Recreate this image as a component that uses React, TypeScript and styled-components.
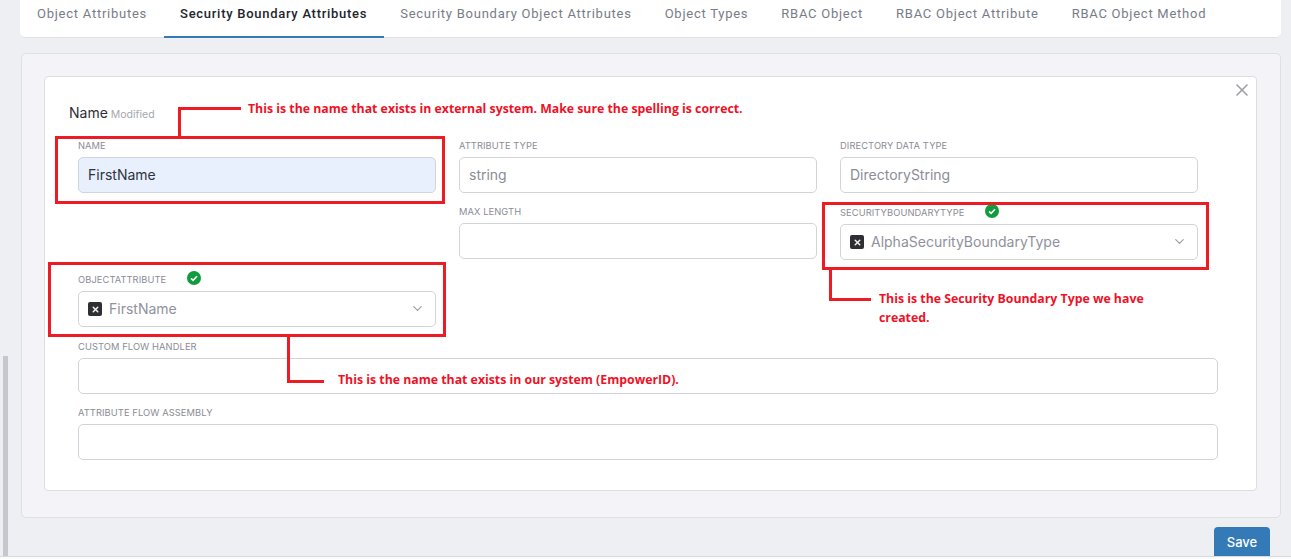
import React from 'react';
import styled, {createGlobalStyle} from 'styled-components';
import {ChevronDown, X} from 'lucide-react';

const GlobalStyle = createGlobalStyle`
  html, body {
    margin: 0;
    padding: 0;
    background: #eeeff3;
    font-family: Inter, 'Liberation Sans', sans-serif;
  }
`;

const Page = styled.div`
  position: relative;
  width: 1291px;
  height: 559px;
  overflow: hidden;
  box-sizing: border-box;
  padding: 0 10px 0 20px;
  background: #eeeff3;
`;

const Scrollbar = styled.div`
  position: absolute;
  left: 3px;
  top: 356px;
  width: 5px;
  height: 200px;
  background: #c6c7cc;
`;

const TabBar = styled.div`
  display: flex;
  height: 38px;
  padding-left: 0.5px;
  background: #fff;
  border-bottom: 1px solid #dfe0e5;
  border-radius: 0 0 5px 5px;
  box-sizing: border-box;
`;

const Tab = styled.div<{$active?: boolean}>`
  height: 38px;
  box-sizing: border-box;
  padding: 6px 16.5px 0;
  font-family: Roboto, sans-serif;
  font-size: 13px;
  line-height: 16px;
  letter-spacing: ${p => (p.$active ? '0.72px' : '0.75px')};
  white-space: nowrap;
  font-weight: ${p => (p.$active ? 500 : 400)};
  color: ${p => (p.$active ? '#22252b' : '#787c87')};
  border-bottom: 2px solid ${p => (p.$active ? '#337ab7' : 'transparent')};
`;

const Panel = styled.div`
  margin: 15px 0 0 1px;
  height: 465px;
  box-sizing: border-box;
  padding: 22px 23px 0 22px;
  background: #f3f3f8;
  border: 1px solid #dfe0e6;
  border-radius: 5px;
`;

const Card = styled.div`
  position: relative;
  height: 415px;
  box-sizing: border-box;
  padding: 26px 38px 0 33px;
  background: #fff;
  border: 1px solid #dcdde2;
  border-radius: 4px;
`;

const Close = styled.div`
  position: absolute;
  right: 4px;
  top: 3px;
  color: #a0a1a6;
  line-height: 0;
`;

const Heading = styled.div`
  display: flex;
  align-items: baseline;
  gap: 3px;
  margin-left: -9px;
  height: 25px;
  font-size: 14px;
  line-height: 20px;
  color: #2c2f36;
`;

const Modified = styled.span`
  font-size: 10.5px;
  color: #a5a7ae;
`;

const Columns = styled.div`
  display: grid;
  grid-template-columns: repeat(3, 358px);
  column-gap: 23px;
  margin-top: 7px;
`;

const Column = styled.div<{$gap?: number}>`
  display: flex;
  flex-direction: column;
  gap: ${p => p.$gap ?? 9}px;
`;

const Spacer = styled.div`
  height: 58px;
`;

const Field = styled.div`
  display: flex;
  flex-direction: column;
`;

const FullField = styled(Field)`
  margin-top: 8.5px;
`;

const Label = styled.div`
  display: flex;
  align-items: center;
  height: 20px;
  box-sizing: border-box;
  padding-top: 2px;
  margin-bottom: 2px;
  font-size: 9.3px;
  line-height: 12px;
  letter-spacing: 0.1px;
  text-transform: uppercase;
  color: #8a8c95;
`;

const Check = styled.svg`
  position: relative;
  top: -2px;
  margin-left: 21px;
`;

const Input = styled.div<{$filled?: boolean}>`
  display: flex;
  align-items: center;
  height: 36px;
  box-sizing: border-box;
  padding: 0 9px 2px;
  font-size: 14px;
  color: ${p => (p.$filled ? '#30333a' : '#8a8d96')};
  background: ${p => (p.$filled ? '#e8f0fe' : '#fff')};
  border: 1px solid #d3d4d9;
  border-radius: 5px;
`;

const SelectBox = styled(Input)`
  justify-content: space-between;
  padding-right: 10px;
  color: #8f929b;
`;

const SelectValue = styled.div`
  display: flex;
  align-items: center;
  gap: 7px;
`;

const TagRemove = styled.span`
  display: flex;
  align-items: center;
  justify-content: center;
  width: 14px;
  height: 14px;
  margin-top: 2px;
  border-radius: 2px;
  background: #2f2f33;
  color: #f2f2f2;
`;

const Footer = styled.div`
  display: flex;
  justify-content: flex-end;
  padding: 9px 11px 0 0;
`;

const SaveButton = styled.button`
  width: 56px;
  height: 30px;
  border: 0;
  border-radius: 4px 4px 0 0;
  background: #337ab7;
  color: #fff;
  font-family: Inter, sans-serif;
  font-size: 13px;
  font-weight: 500;
`;

const BottomEdge = styled.div`
  position: absolute;
  left: 0;
  right: 0;
  bottom: 0;
  height: 2px;
  background: #fbfbfc;
  border-top: 1px solid #d9dade;
`;

const RedBox = styled.div<{$x: number; $y: number; $w: number; $h: number}>`
  position: absolute;
  left: ${p => p.$x}px;
  top: ${p => p.$y}px;
  width: ${p => p.$w}px;
  height: ${p => p.$h}px;
  box-sizing: border-box;
  border: 3px solid #ed1c24;
`;

const Leader = styled.div<{$x: number; $y: number; $w: number; $h: number}>`
  position: absolute;
  left: ${p => p.$x}px;
  top: ${p => p.$y}px;
  width: ${p => p.$w}px;
  height: ${p => p.$h}px;
  background: #ed1c24;
`;

const Note = styled.div<{$x: number; $y: number; $w?: number}>`
  position: absolute;
  left: ${p => p.$x}px;
  top: ${p => p.$y}px;
  width: ${p => (p.$w ? `${p.$w}px` : 'auto')};
  font-family: 'Open Sans', sans-serif;
  font-size: 12.3px;
  font-weight: 700;
  line-height: 19px;
  white-space: ${p => (p.$w ? 'normal' : 'nowrap')};
  color: #ee1127;
`;

function CheckBadge() {
  return (
    <Check width="14" height="14" viewBox="0 0 14 14">
      <circle cx="7" cy="7" r="7" fill="#0f9b3e" />
      <path d="M4 7.3l2.1 2L10 5.2" fill="none" stroke="#fff" strokeWidth="1.6" />
    </Check>
  );
}

function Select({value}: {value: string}) {
  return (
    <SelectBox>
      <SelectValue>
        <TagRemove>
          <X size={9} strokeWidth={4} />
        </TagRemove>
        {value}
      </SelectValue>
      <ChevronDown size={15} strokeWidth={1.8} color="#9a9ca3" />
    </SelectBox>
  );
}

const TABS = [
  'Object Attributes',
  'Security Boundary Attributes',
  'Security Boundary Object Attributes',
  'Object Types',
  'RBAC Object',
  'RBAC Object Attribute',
  'RBAC Object Method',
];

export default function App() {
  return (
    <Page>
      <GlobalStyle />
      <Scrollbar />
      <TabBar>
        {TABS.map((t, i) => (
          <Tab key={t} $active={i === 1}>
            {t}
          </Tab>
        ))}
      </TabBar>
      <Panel>
        <Card>
          <Close>
            <X size={20} strokeWidth={2} />
          </Close>
          <Heading>
            Name <Modified>Modified</Modified>
          </Heading>
          <Columns>
            <Column>
              <Field>
                <Label>Name</Label>
                <Input $filled>FirstName</Input>
              </Field>
              <Spacer />
              <Field>
                <Label>
                  ObjectAttribute
                  <CheckBadge />
                </Label>
                <Select value="FirstName" />
              </Field>
            </Column>
            <Column $gap={8}>
              <Field>
                <Label>Attribute Type</Label>
                <Input>string</Input>
              </Field>
              <Field>
                <Label>Max Length</Label>
                <Input />
              </Field>
            </Column>
            <Column>
              <Field>
                <Label>Directory Data Type</Label>
                <Input>DirectoryString</Input>
              </Field>
              <Field>
                <Label>
                  SecurityBoundaryType
                  <CheckBadge />
                </Label>
                <Select value="AlphaSecurityBoundaryType" />
              </Field>
            </Column>
          </Columns>
          <FullField>
            <Label>Custom Flow Handler</Label>
            <Input />
          </FullField>
          <FullField>
            <Label>Attribute Flow Assembly</Label>
            <Input />
          </FullField>
        </Card>
      </Panel>
      <Footer>
        <SaveButton>Save</SaveButton>
      </Footer>
      <BottomEdge />

      <RedBox $x={55} $y={136} $w={390} $h={68} />
      <Leader $x={178} $y={107} $w={3} $h={30} />
      <Leader $x={178} $y={107} $w={63} $h={3} />
      <Note $x={248} $y={99}>
        This is the name that exists in external system. Make sure the spelling is correct.
      </Note>

      <RedBox $x={48} $y={262} $w={398} $h={75} />
      <Leader $x={287} $y={336} $w={3} $h={46} />
      <Leader $x={287} $y={380} $w={37} $h={3} />
      <Note $x={338} $y={370}>
        This is the name that exists in our system (EmpowerID).
      </Note>

      <RedBox $x={822} $y={202} $w={387} $h={68} />
      <Leader $x={829} $y={269} $w={3} $h={31} />
      <Leader $x={829} $y={298} $w={42} $h={3} />
      <Note $x={879} $y={289} $w={290}>
        This is the Security Boundary Type we have created.
      </Note>
    </Page>
  );
}
